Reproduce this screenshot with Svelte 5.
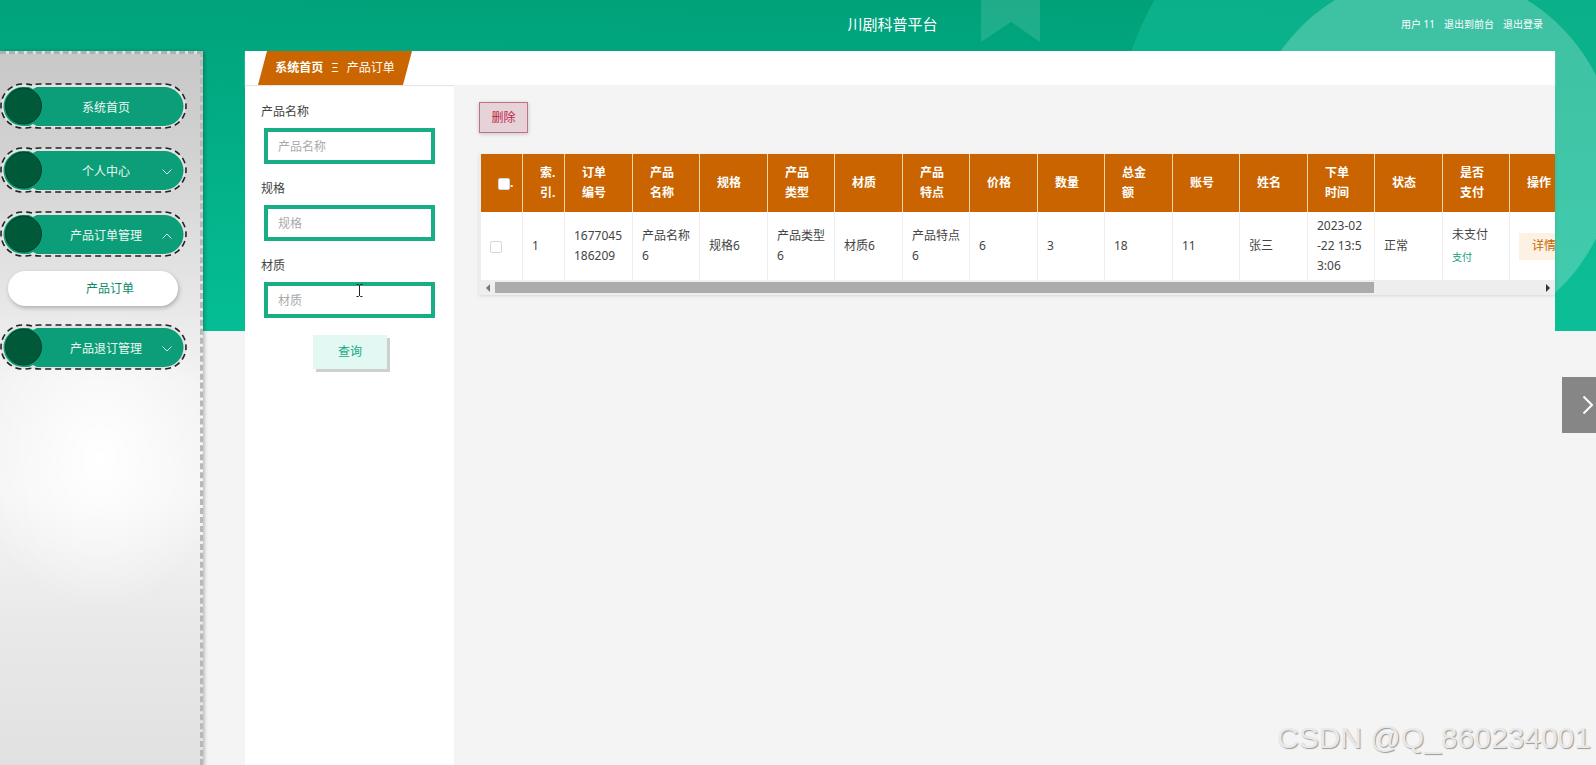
<script lang="ts">
  let menus = [
    { title: "系统首页", arrow: "", children: [] as string[] },
    { title: "个人中心", arrow: "down", children: [] as string[] },
    { title: "产品订单管理", arrow: "up", children: ["产品订单"] },
    { title: "产品退订管理", arrow: "down", children: [] as string[] }
  ];

  let fields = [
    { id: "name", label: "产品名称", value: "" },
    { id: "spec", label: "规格", value: "" },
    { id: "material", label: "材质", value: "" }
  ];

  // \n keeps the two line headings and values broken in the narrow columns
  const columns = [
    "订单\n编号", "产品\n名称", "规格", "产品\n类型", "材质", "产品\n特点", "价格",
    "数量", "总金\n额", "账号", "姓名", "下单\n时间", "状态"
  ];
  const rows = [
    [
      "1677045\n186209", "产品名称\n6", "规格6", "产品类型\n6", "材质6", "产品特点\n6", "6",
      "3", "18", "11", "张三", "2023-02\n-22 13:5\n3:06", "正常"
    ]
  ];

  const search = () => {
    console.log(fields.map((f) => f.value));
  };
</script>

<div class="page">
  <svg class="hero" viewBox="0 0 1596 331" preserveAspectRatio="xMaxYMin slice" aria-hidden="true">
    <defs>
      <linearGradient id="green" x1="0.6" y1="0" x2="0.5" y2="1">
        <stop offset="0" stop-color="#00a179" />
        <stop offset="1" stop-color="#05bd94" />
      </linearGradient>
    </defs>
    <rect width="1596" height="331" fill="url(#green)" />
    <circle cx="1431" cy="157" r="318" fill="#16c49d" fill-opacity="0.45" />
    <circle cx="1431" cy="157" r="184" fill="#fff" fill-opacity="0.22" />
    <path d="M981 0h59v42l-29-20-30 20z" fill="#fff" fill-opacity="0.12" />
  </svg>

  <header class="top">
    <h1>川剧科普平台</h1>
    <div class="user">
      <span>用户 11</span>
      <a href="#front">退出到前台</a>
      <a href="#logout">退出登录</a>
    </div>
  </header>

  <div class="body">
    <nav class="side">
      {#each menus as menu}
        <button class="menu" type="button">
          <svg class="shape" viewBox="0 0 188 46" aria-hidden="true">
            <path d="M32 2Q28 1 23 1A22 22 0 0 0 23 45Q28 45 32 44Q36 45 40 45H164A22 22 0 0 0 164 1H40Q36 1 32 2Z" fill="#e3e3e3" stroke="#222" stroke-width="1.6" stroke-dasharray="6 4" />
            <path d="M23 4H164A19 19 0 0 1 164 43H23A19 19 0 0 1 23 4Z" fill="#0c9e78" />
            <path d="M29 4L33 6L37 4ZM29 43L33 41L37 43Z" fill="#e3e3e3" />
            <circle cx="23.500" cy="23" r="18" fill="#005a39" stroke="#073c29" />
          </svg>
          <span class="menu-text">{menu.title}</span>
          {#if menu.arrow}
            <svg class="arrow" class:up={menu.arrow === "up"} viewBox="0 0 10 6" aria-hidden="true">
              <path d="M0.500 0.500L5 5L9.500 0.500" />
            </svg>
          {/if}
        </button>
        {#each menu.children as child}
          <a class="sub" href="#order">{child}</a>
        {/each}
      {/each}
    </nav>

    <main class="content">
      <div class="crumbs">
        <div class="crumb">
          <b>系统首页</b>
          <span class="sep">Ξ</span>
          <span>产品订单</span>
        </div>
      </div>

      <div class="panels">
        <form class="filter" onsubmit={(e) => { e.preventDefault(); search(); }}>
          {#each fields as field}
            <div class="field">
              <label for={field.id}>{field.label}</label>
              <input id={field.id} type="text" placeholder={field.label} bind:value={field.value} />
            </div>
          {/each}
          <button class="query" type="submit">查询</button>
          <svg class="caret" viewBox="0 0 7 13" aria-hidden="true">
            <path d="M0.500 0.500H2.500L3.500 1.500L4.500 0.500H6.500M3.500 1V12M0.500 12.500H2.500L3.500 11.500L4.500 12.500H6.500" />
          </svg>
        </form>

        <section class="list">
          <button class="delete" type="button">删除</button>
          <div class="table-box">
            <div class="scroll">
              <table>
                <colgroup>
                  <col class="small" />
                  <col class="small" />
                  {#each columns as _}
                    <col class="mid" />
                  {/each}
                  <col class="mid" />
                  <col class="wide" />
                </colgroup>
                <thead>
                  <tr>
                    <th><input class="all" type="checkbox" aria-label="全选" />.</th>
                    <th>{"索.\n引."}</th>
                    {#each columns as column}
                      <th>{column}</th>
                    {/each}
                    <th>{"是否\n支付"}</th>
                    <th>操作</th>
                  </tr>
                </thead>
                <tbody>
                  {#each rows as row, i}
                    <tr>
                      <td><input type="checkbox" aria-label="选择" /></td>
                      <td>{i + 1}</td>
                      {#each row as cell}
                        <td>{cell}</td>
                      {/each}
                      <td><span class="paid">未支付</span><a class="pay" href="#pay">支付</a></td>
                      <td><button class="detail" type="button">详情</button></td>
                    </tr>
                  {/each}
                </tbody>
              </table>
            </div>
            <div class="bar">
              <svg viewBox="0 0 4 8" aria-hidden="true"><path d="M4 0V8L0 4z" fill="#777" /></svg>
              <div class="track"><div class="thumb"></div></div>
              <svg viewBox="0 0 4 8" aria-hidden="true"><path d="M0 0V8L4 4z" fill="#333" /></svg>
            </div>
          </div>
        </section>
      </div>
    </main>
  </div>

  <button class="next" type="button" aria-label="下一张">
    <svg viewBox="0 0 12 20" aria-hidden="true"><path d="M1.500 1.500L10 10L1.500 18.500" /></svg>
  </button>
  <div class="mark">CSDN @Q_860234001</div>
</div>

<style>
  :global(body) {
    margin: 0;
    background: #f4f4f4;
  }
  .page {
    position: relative;
    display: flex;
    flex-direction: column;
    min-height: 100vh;
    overflow: hidden;
    font: 12px/20px "Noto Sans", "Noto Sans CJK SC", sans-serif;
    color: #444;
  }
  .page * {
    box-sizing: border-box;
  }
  button, input {
    font: inherit;
  }
  button {
    cursor: pointer;
  }
  a {
    text-decoration: none;
  }
  .hero {
    position: absolute;
    top: 0;
    left: 0;
    width: 100%;
    height: 331px;
  }
  .top {
    position: relative;
    display: flex;
    align-items: center;
    justify-content: flex-end;
    height: 51px;
    padding: 0 53px 3px 0;
    color: #fff;
  }
  h1 {
    flex: 1;
    margin: 0;
    padding-left: 584px;
    padding-right: 200px;
    font-size: 15px;
    font-weight: 400;
    text-align: center;
    white-space: nowrap;
  }
  .user {
    display: flex;
    gap: 9px;
    font-size: 10px;
  }
  .user a {
    color: #fff;
  }
  .body {
    position: relative;
    flex: 1;
    display: flex;
    gap: 42px;
    padding-right: 41px;
  }

  .side {
    display: flex;
    flex-direction: column;
    gap: 18px;
    width: 203px;
    flex: none;
    padding-top: 29px;
    border-top: 3px dashed #b0b0b0;
    border-right: 3px dashed #b8b8b8;
    background:
      radial-gradient(120px 150px at 50% 57%, #fff, rgba(255, 255, 255, 0.6) 40%, rgba(255, 255, 255, 0)),
      linear-gradient(#c8c8c8, #d2d2d2 14%, #e2e2e2 30%, #f3f3f3 46%, #f5f5f5 62%, #e9e9e9 80%, #e1e1e1);
    box-shadow: 1px 1px 4px rgba(0, 0, 0, 0.3);
  }
  .menu {
    position: relative;
    width: 188px;
    height: 46px;
    padding: 4px 0 0 24px;
    border: none;
    background: none;
    color: #f0f8f5;
  }
  .shape {
    position: absolute;
    top: 0;
    left: 0;
    width: 188px;
    height: 46px;
  }
  .menu-text {
    position: relative;
  }
  .arrow {
    position: absolute;
    right: 16px;
    top: 22px;
    width: 10px;
    height: 6px;
    fill: none;
    stroke: #d8efe8;
  }
  .up {
    transform: rotate(180deg);
  }
  .sub {
    width: 170px;
    height: 35px;
    margin: -4px 0 0 8px;
    padding-left: 34px;
    border-radius: 18px;
    background: #fff;
    box-shadow: 1px 2px 4px rgba(0, 0, 0, 0.25);
    color: #0c8a68;
    line-height: 35px;
    text-align: center;
  }

  .content {
    flex: 1;
    min-width: 0;
    display: flex;
    flex-direction: column;
    background: #fff;
  }
  .crumbs {
    height: 34px;
    padding-left: 13px;
    box-shadow: 0 1px 1px #e6e6e6;
  }
  .crumb {
    display: flex;
    justify-content: center;
    gap: 8px;
    width: 154px;
    height: 34px;
    background: #ca6500;
    clip-path: polygon(9px 0, 100% 0, calc(100% - 9px) 100%, 0 100%);
    color: #fff;
    line-height: 34px;
  }
  .panels {
    flex: 1;
    display: flex;
  }
  .filter {
    position: relative;
    width: 209px;
    flex: none;
    padding: 17px 20px 0 16px;
  }
  .field {
    height: 77px;
  }
  .field label {
    display: block;
  }
  .field input {
    display: block;
    width: 171px;
    height: 36px;
    margin: 6px 0 0 3px;
    padding: 0 10px;
    border: 4px solid #18ad85;
    background: #fff;
    outline: none;
    color: #444;
  }
  .field input::placeholder {
    color: #aaa;
  }
  .query {
    display: block;
    width: 74px;
    height: 34px;
    margin: 2px 0 0 52px;
    border: none;
    background: #e4f8f3;
    box-shadow: 3px 3px 0 #ccd1d0;
    color: #10a982;
  }
  .caret {
    position: absolute;
    left: 111px;
    top: 199px;
    width: 7px;
    height: 13px;
    fill: none;
    stroke: #222;
  }
  .list {
    flex: 1;
    min-width: 0;
    padding: 17px 0 0 25px;
    background: #f4f4f5;
  }
  .delete {
    display: block;
    width: 49px;
    height: 31px;
    padding: 0;
    border: 1px solid #c2708a;
    background: #e6d3d7;
    box-shadow: 0 1px 4px rgba(0, 0, 0, 0.2);
    color: #bd2348;
  }
  .table-box {
    margin-top: 21px;
    padding-left: 2px;
    background: #eee;
    box-shadow: 0 1px 3px rgba(0, 0, 0, 0.12);
  }
  .scroll {
    overflow: hidden;
  }
  table {
    width: 1276px;
    table-layout: fixed;
    border-collapse: separate;
    border-spacing: 0;
    background: #fff;
    white-space: pre;
  }
  .small {
    width: 42px;
  }
  .mid {
    width: 67px;
  }
  .mid:nth-child(odd) {
    width: 68px;
  }
  th, td {
    border-right: 1px solid #eee;
    text-align: left;
  }
  th {
    height: 58px;
    padding: 0 0 0 17px;
    border-right-color: #f0d9a8;
    background: #c96400;
    color: #fff;
    font-weight: 700;
  }
  td {
    height: 68px;
    padding: 0 0 0 9px;
  }
  th input, td input {
    appearance: none;
    width: 12px;
    height: 12px;
    margin: 0;
    border: 1px solid #d8d8d8;
    border-radius: 2px;
    background: #fff;
    vertical-align: middle;
  }
  .paid {
    display: block;
  }
  .pay {
    display: block;
    margin-top: 2px;
    color: #10a078;
    font-size: 10px;
  }
  .detail {
    height: 27px;
    padding: 0 13px;
    border: none;
    background: #fdf1e3;
    color: #ca6500;
  }
  .bar {
    display: flex;
    align-items: center;
    gap: 5px;
    height: 15px;
    padding: 0 5px;
  }
  .bar svg {
    width: 4px;
    height: 8px;
    flex: none;
  }
  .track {
    flex: 1;
  }
  .thumb {
    width: 84%;
    height: 11px;
    background: #ababab;
  }

  .next {
    position: absolute;
    right: 0;
    top: 377px;
    width: 34px;
    height: 56px;
    padding: 0 2px 0 0;
    border: none;
    background: #868686;
    text-align: right;
  }
  .next svg {
    width: 12px;
    height: 20px;
    vertical-align: middle;
    fill: none;
    stroke: #fff;
    stroke-width: 2;
  }
  .mark {
    position: absolute;
    right: 5px;
    bottom: 7px;
    color: #e9e9e9;
    font: 30px/40px "Liberation Sans", sans-serif;
    text-shadow: 1px 1px 1px #999;
  }
</style>
